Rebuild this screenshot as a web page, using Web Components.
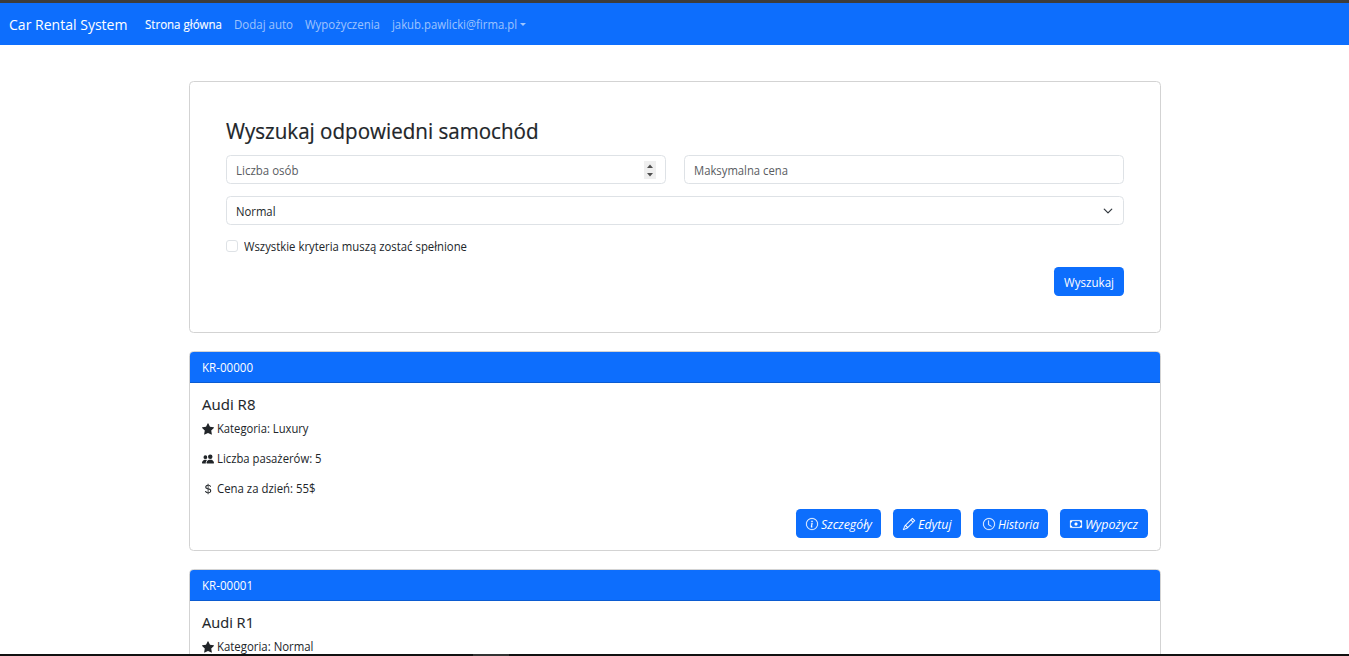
<!DOCTYPE html>
<html lang="pl">
<head>
<meta charset="utf-8">
<title>Car Rental System</title>
<style>
html,body{margin:0;height:100%;overflow:hidden;background:#fff}
body{font-family:"Open Sans","Noto Sans",sans-serif;font-size:12px;color:#212529}
</style>
</head>
<body>
<rental-app></rental-app>
<script>
const ICONS = {
  star:'<path d="M3.612 15.443c-.386.198-.824-.149-.746-.592l.83-4.73L.173 6.765c-.329-.314-.158-.888.283-.95l4.898-.696L7.538.792c.197-.39.73-.39.927 0l2.184 4.327 4.898.696c.441.062.612.636.282.95l-3.522 3.356.83 4.73c.078.443-.36.79-.746.592L8 13.187l-4.389 2.256z"/>',
  people:'<path d="M7 14s-1 0-1-1 1-4 5-4 5 3 5 4-1 1-1 1zm4-6a3 3 0 1 0 0-6 3 3 0 0 0 0 6m-5.784 6A2.24 2.24 0 0 1 5 13c0-1.355.68-2.75 1.936-3.72A6.3 6.3 0 0 0 5 9c-4 0-5 3-5 4s1 1 1 1zM4.5 8a2.5 2.5 0 1 0 0-5 2.5 2.5 0 0 0 0 5"/>',
  dollar:'<path d="M4 10.781c.148 1.667 1.513 2.85 3.591 3.003V15h1.043v-1.216c2.27-.179 3.678-1.438 3.678-3.3 0-1.59-.947-2.51-2.956-3.028l-.722-.187V3.467c1.122.11 1.879.714 2.07 1.616h1.47c-.166-1.6-1.54-2.748-3.54-2.875V1H7.591v1.233c-1.939.23-3.27 1.472-3.27 3.156 0 1.454.966 2.483 2.661 2.917l.61.162v4.031c-1.149-.17-1.94-.8-2.131-1.718zm3.391-3.836c-1.043-.263-1.6-.825-1.6-1.616 0-.944.704-1.641 1.8-1.828v3.495l-.2-.05zm1.591 1.872c1.287.323 1.852.859 1.852 1.769 0 1.097-.826 1.828-2.2 1.939V8.73z"/>',
  info:'<path d="M8 15A7 7 0 1 1 8 1a7 7 0 0 1 0 14m0 1A8 8 0 1 0 8 0a8 8 0 0 0 0 16"/><path d="m8.930 6.588-2.290.287-.082.380.450.083c.294.070.352.176.288.469l-.738 3.468c-.194.897.105 1.319.808 1.319.545 0 1.178-.252 1.465-.598l.088-.416c-.200.176-.492.246-.686.246-.275 0-.375-.193-.304-.533zM9 4.500a1 1 0 1 1-2 0 1 1 0 0 1 2 0"/>',
  pencil:'<path d="M12.146.146a.5.5 0 0 1 .708 0l3 3a.5.5 0 0 1 0 .708l-10 10a.5.5 0 0 1-.168.110l-5 2a.5.5 0 0 1-.650-.650l2-5a.5.5 0 0 1 .110-.168zM11.207 2.500 13.500 4.793 14.793 3.500 12.500 1.207zm1.586 3L10.500 3.207 4 9.707V10h.5a.5.5 0 0 1 .5.5v.5h.5a.5.5 0 0 1 .5.5v.5h.293zm-9.761 5.175-.106.106-1.528 3.821 3.821-1.528.106-.106A.5.5 0 0 1 5 12.500V12h-.5a.5.5 0 0 1-.5-.5V11h-.5a.5.5 0 0 1-.468-.325"/>',
  clock:'<path d="M8 3.500a.5.5 0 0 0-1 0V9a.5.5 0 0 0 .252.434l3.500 2a.5.5 0 0 0 .496-.868L8 8.710z"/><path d="M8 16A8 8 0 1 0 8 0a8 8 0 0 0 0 16m7-8A7 7 0 1 1 1 8a7 7 0 0 1 14 0"/>',
  cash:'<path d="M8 10a2 2 0 1 0 0-4 2 2 0 0 0 0 4"/><path d="M0 4a1 1 0 0 1 1-1h14a1 1 0 0 1 1 1v8a1 1 0 0 1-1 1H1a1 1 0 0 1-1-1zm3 0a2 2 0 0 1-2 2v4a2 2 0 0 1 2 2h10a2 2 0 0 1 2-2V6a2 2 0 0 1-2-2z"/>'
};
const define = (name, render, after) => customElements.define(name, class extends HTMLElement {
  connectedCallback(){
    if (this.shadowRoot) return;
    this.attachShadow({mode:'open'}).innerHTML = render(this);
    if (after) after(this);
  }
});

/* One line of text condensed to an exact advance width. */
define('text-run', el => `<style>:host{display:block;flex:none;white-space:nowrap;width:${el.getAttribute('w')}px}span{display:inline-block;transform-origin:0 50%}</style><span>${el.getAttribute('text')}</span>`, el => {
  const s = el.shadowRoot.querySelector('span');
  const w = s.getBoundingClientRect().width;
  if (w) s.style.transform = `scaleX(${el.getAttribute('w') / w})`;
});

define('bs-icon', el => `<style>:host{display:block;flex:none;width:12px;height:12px}svg{display:block;width:100%;height:100%;overflow:visible}</style><svg viewBox="0 0 16 16" fill="currentColor">${ICONS[el.getAttribute('name')]}</svg>`);

define('nav-bar', () => `<style>
:host{display:flex;box-sizing:border-box;height:45px;border-top:3px solid #3c3c3c;background:#0d6efd;padding:1px 9px 0;align-items:center;color:rgba(255,255,255,.6);line-height:18px}
.brand{font-size:15px;color:#fff;margin:-1px 17px 0 0}
nav{display:flex;gap:12px;align-items:center}
.on{color:#fff;-webkit-text-stroke:.1px #fff}
.user{display:flex;align-items:center;gap:3px}
.user i{border:3.4px solid transparent;border-top-color:currentColor;border-bottom:0}
</style><text-run class="brand" w="118.500" text="Car Rental System"></text-run>
<nav><text-run class="on" w="77" text="Strona główna"></text-run><text-run w="59" text="Dodaj auto"></text-run><text-run w="75" text="Wypożyczenia"></text-run><div class="user"><text-run w="125" text="jakub.pawlicki@firma.pl"></text-run><i></i></div></nav>`);

define('form-field', () => `<style>
:host{display:flex;box-sizing:border-box;height:29px;border:1px solid #dee2e6;border-radius:4.5px;padding:2px 9px 0;align-items:center;justify-content:space-between;line-height:18px;background:#fff}
</style><slot></slot>`);

define('spin-buttons', () => `<style>:host{display:block;width:12px;height:18px;background:#efefef;margin-top:-2px}svg{display:block}</style>
<svg width="12" height="18" viewBox="0 0 12 18" fill="#505050"><path d="M3 7 6 3.500 9 7zM3 12h6L6 15.500z"/></svg>`);

define('primary-button', el => `<style>
:host{display:flex;box-sizing:border-box;width:${el.getAttribute('width')}px;height:29px;padding:2px 0 0 10px;border-radius:4.500px;background:#0d6efd;color:#fff;align-items:center;gap:3px;line-height:18px}
:host([icon]){font-style:italic}
bs-icon{margin-top:-1px;stroke:#fff;stroke-width:.25px}
</style>${el.hasAttribute('icon') ? `<bs-icon name="${el.getAttribute('icon')}"></bs-icon>` : ''}<text-run w="${el.getAttribute('tw')}" text="${el.getAttribute('label')}"></text-run>`);

define('search-card', () => `<style>
:host{display:block;box-sizing:border-box;height:252px;border:1px solid #d3d3d3;border-radius:4.500px;padding:35px 36px 36px}
h2{margin:0 0 10px;font-size:21px;font-weight:500;line-height:28px;-webkit-text-stroke:.2px #212529}
.row{display:grid;grid-template-columns:1fr 1fr;gap:18px;margin-bottom:12px}
.ph{color:#595c5f}
.check{display:flex;align-items:center;gap:6px;line-height:18px;margin-top:13px}
.check i{box-sizing:border-box;width:12px;height:12px;border:1px solid #dee2e6;border-radius:3px;margin-top:-3px}
.end{display:flex;justify-content:flex-end;margin-top:11px}
</style>
<h2><text-run w="312.500" text="Wyszukaj odpowiedni samochód"></text-run></h2>
<div class="row"><form-field><text-run class="ph" w="62.500" text="Liczba osób"></text-run><spin-buttons></spin-buttons></form-field>
<form-field><text-run class="ph" w="94" text="Maksymalna cena"></text-run></form-field></div>
<form-field><text-run w="39.500" text="Normal"></text-run><svg style="margin:-2px 1px 0 0" width="10" height="10" viewBox="0 0 16 16" fill="none" stroke="#343a40" stroke-width="2" stroke-linecap="round" stroke-linejoin="round"><path d="m2 5 6 6 6-6"/></svg></form-field>
<div class="check"><i></i><text-run w="223" text="Wszystkie kryteria muszą zostać spełnione"></text-run></div>
<div class="end"><primary-button width="70" tw="50" label="Wyszukaj"></primary-button></div>`);

define('car-card', el => { const a = n => el.getAttribute(n); return `<style>
:host{display:block;flex:none;box-sizing:border-box;height:200px;border:1px solid #d3d3d3;border-radius:4.500px;overflow:hidden}
header{box-sizing:border-box;height:31px;padding:7px 12px 0;line-height:18px;background:#0d6efd;color:#fff;border-bottom:1px solid #0b5bd1}
.body{padding:12px}
h5{margin:0 0 7px;font-size:15px;font-weight:500;line-height:18px;-webkit-text-stroke:.1px #212529}
.line{display:flex;align-items:center;gap:3px;height:18px;line-height:18px;margin-bottom:12px}
.actions{display:flex;justify-content:flex-end;gap:12px;margin-top:-1px}
</style><header><text-run w="51" text="${a('plate')}"></text-run></header>
<div class="body"><h5><text-run w="${a('mw')}" text="${a('model')}"></text-run></h5>
<div class="line"><bs-icon name="star"></bs-icon><text-run w="${a('cw')}" text="Kategoria: ${a('category')}"></text-run></div>
${el.hasAttribute('brief') ? '' : `<div class="line"><bs-icon name="people"></bs-icon><text-run w="104.500" text="Liczba pasażerów: 5"></text-run></div>
<div class="line"><bs-icon name="dollar"></bs-icon><text-run w="98.500" text="Cena za dzień: 55$"></text-run></div>
<div class="actions"><primary-button icon="info" width="85" tw="51" label="Szczegóły"></primary-button><primary-button icon="pencil" width="68" tw="33.500" label="Edytuj"></primary-button><primary-button icon="clock" width="75" tw="41" label="Historia"></primary-button><primary-button icon="cash" width="88" tw="53" label="Wypożycz"></primary-button></div>`}</div>`; });

define('rental-app', () => `<style>
:host{display:flex;flex-direction:column;height:656px;overflow:hidden}
nav-bar{flex:none}
main{flex:1;min-height:0;overflow:hidden;box-sizing:border-box;padding:36px 188px 0 189px}
search-card,car-card{margin-bottom:18px}
footer{flex:none;height:2px;background:#111;display:flex}
footer i{width:36px;margin-left:473px;background:#333}
</style><nav-bar></nav-bar><main><search-card></search-card>
<car-card plate="KR-00000" model="Audi R8" mw="53.500" category="Luxury" cw="91.500"></car-card>
<car-card brief plate="KR-00001" model="Audi R1" mw="52" category="Normal" cw="96.500"></car-card></main><footer><i></i></footer>`);
</script>
</body>
</html>
